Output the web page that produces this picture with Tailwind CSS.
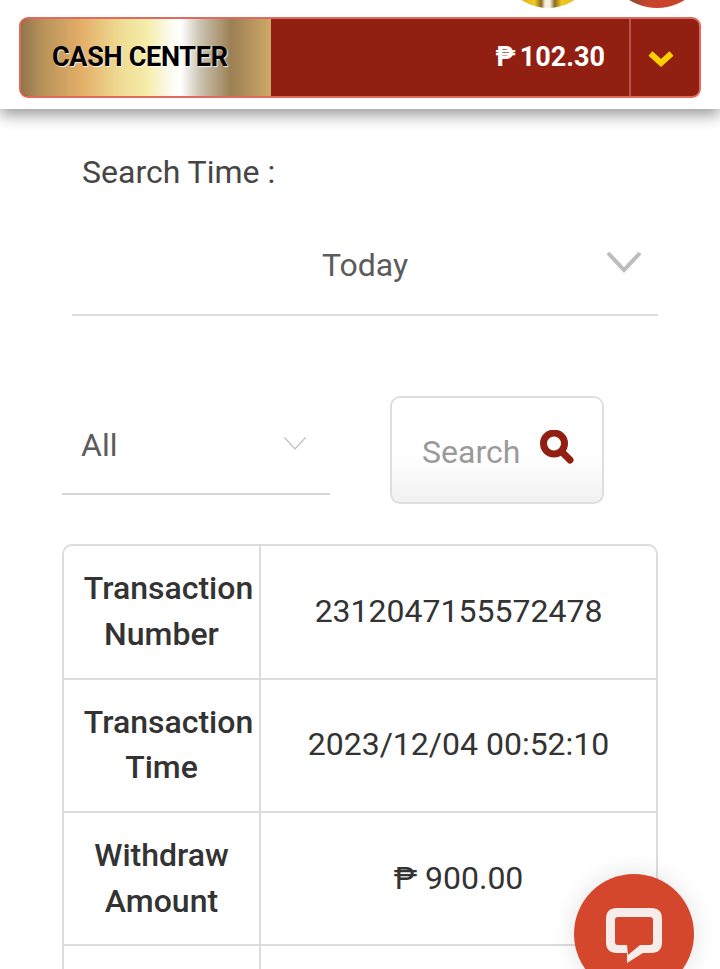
<!DOCTYPE html>
<html lang="en">
<head>
  <meta charset="UTF-8" />
  <title>Cash Center</title>
  <meta name="viewport" content="width=device-width, initial-scale=1.0" />
  <script src="https://cdn.jsdelivr.net/npm/@tailwindcss/browser@4"></script>
</head>
<body class="bg-white font-['Roboto','Noto_Sans',sans-serif]">
<div class="relative w-[720px] h-[969px] overflow-hidden bg-white">

  <!-- header -->
  <header class="relative z-10 h-[109px] bg-white pt-[17px] px-[19px] shadow-[0_6px_14px_rgba(0,0,0,0.4)]">
    <!-- medals cut off by the top edge -->
    <div class="absolute left-[500px] top-[-88px] w-[96px] h-[96px] rounded-full bg-[linear-gradient(90deg,#d8a818_0%,#e0b020_20%,#f0c820_36%,#8a6a20_43%,#f5f0e0_47%,#f5f0e0_52%,#8a6a20_57%,#f0c820_64%,#d8a818_100%)]"></div>
    <div class="absolute left-[605px] top-[-96px] w-[104px] h-[104px] rounded-full bg-[linear-gradient(100deg,#7a4a34_30%,#c9452c_50%,#c9402a_100%)]"></div>

    <div class="flex h-[81px] w-[682px] rounded-[9px] border-2 border-[#e2695e] overflow-hidden bg-[#912013]">
      <div class="flex items-center w-[250px] h-full pl-[31px] bg-[linear-gradient(90deg,#93744c_0%,#b8935a_9%,#e3ae68_24%,#efdc94_40%,#f5eca8_50%,#fdfbf0_60%,#ffffff_64%,#c9c0ae_72%,#9c8054_84%,#b5935c_92%,#cdaa66_100%)]">
        <span class="text-[27px] leading-none font-bold text-black tracking-[-0.3px] [text-shadow:1px_1px_1px_rgba(255,255,255,0.8)]">CASH CENTER</span>
      </div>
      <div class="flex items-center justify-end flex-1 h-full pr-[24px] text-white text-[27px] font-bold pb-[1px]">
        <span class="mr-[4px]">₱</span><span>102.30</span>
      </div>
      <div class="flex items-center justify-center w-[70px] h-full border-l-2 border-l-[#b5564c]">
        <svg width="26" height="18" viewBox="0 0 26 18" class="mt-[3px] -ml-[8px]"><path d="M2.5 3.5 L13 13 L23.5 3.5" fill="none" stroke="#fbd000" stroke-width="6"/></svg>
      </div>
    </div>
  </header>

  <main class="relative">
    <!-- search time -->
    <p class="pl-[82px] pt-[44px] text-[32px] leading-[38px] text-[#454545]">Search Time :</p>

    <div class="flex items-center relative ml-[72px] w-[586px] h-[84px] mt-[41px] border-b-2 border-[#dcdcdc]">
      <span class="w-full text-center text-[32px] leading-[38px] text-[#5c5c5c] pb-[16px]">Today</span>
      <svg width="36" height="22" viewBox="0 0 36 22" class="absolute right-[16px] top-[19px]"><path d="M2 2 L18 19 L34 2" fill="none" stroke="#bdbdbd" stroke-width="4"/></svg>
    </div>

    <!-- filter row -->
    <div class="flex items-start ml-[62px] mt-[80px]">
      <div class="relative flex items-center w-[268px] h-[99px] border-b-2 border-[#d6d6d6] pl-[19px]">
        <span class="text-[32px] leading-[38px] text-[#5c5c5c]">All</span>
        <svg width="24" height="16" viewBox="0 0 24 16" class="absolute left-[221px] top-[40px]"><path d="M1.5 1.5 L12 13 L22.5 1.5" fill="none" stroke="#c4c4c4" stroke-width="1.5"/></svg>
      </div>
      <button class="flex items-center ml-[60px] w-[214px] h-[108px] rounded-[10px] border-2 border-[#dedede] bg-[linear-gradient(180deg,#ffffff_0%,#ffffff_55%,#f1f1f1_100%)] pl-[30px]">
        <span class="text-[32px] leading-[38px] text-[#9a9a9a] mt-[3px]">Search</span>
        <svg width="36" height="36" viewBox="0 0 36 36" class="ml-[20px] -mt-[5px]"><circle cx="14" cy="13.5" r="10.5" fill="none" stroke="#912013" stroke-width="7"/><path d="M22 22 L30 30" stroke="#912013" stroke-width="7" stroke-linecap="round"/></svg>
      </button>
    </div>

    <!-- details table -->
    <div class="ml-[62px] mt-[40px] w-[596px] rounded-tl-[10px] rounded-tr-[10px] border-2 border-b-0 border-[#dcdcdc]">
      <div class="flex h-[134px] border-b-2 border-[#dcdcdc]">
        <div class="flex items-center justify-center w-[197px] shrink-0 border-r-2 border-[#dcdcdc] text-[32px] leading-[45.5px] font-medium text-[#333] text-center pb-[1px]">
          <span class="block whitespace-nowrap"><span class="inline-block translate-x-[7px]">Transaction</span><br />Number</span>
        </div>
        <div class="flex items-center justify-center flex-1 text-[32px] text-[#333] pb-[2px]">2312047155572478</div>
      </div>
      <div class="flex h-[133px] border-b-2 border-[#dcdcdc]">
        <div class="flex items-center justify-center w-[197px] shrink-0 border-r-2 border-[#dcdcdc] text-[32px] leading-[45.5px] font-medium text-[#333] text-center pb-[1px]">
          <span class="block whitespace-nowrap"><span class="inline-block translate-x-[7px]">Transaction</span><br />Time</span>
        </div>
        <div class="flex items-center justify-center flex-1 text-[32px] text-[#333] pb-[4px]">2023/12/04 00:52:10</div>
      </div>
      <div class="flex h-[133px] border-b-2 border-[#dcdcdc]">
        <div class="flex items-center justify-center w-[197px] shrink-0 border-r-2 border-[#dcdcdc] text-[32px] leading-[45.5px] font-medium text-[#333] text-center">
          <span class="block whitespace-nowrap">Withdraw<br />Amount</span>
        </div>
        <div class="flex items-center justify-center flex-1 text-[32px] text-[#333] pb-[2px]">₱ 900.00</div>
      </div>
      <div class="flex h-[60px]">
        <div class="w-[197px] shrink-0 border-r-2 border-[#dcdcdc]"></div>
        <div class="flex-1"></div>
      </div>
    </div>
  </main>

  <!-- chat button -->
  <div class="absolute z-20 left-[574px] top-[874px] flex justify-center w-[120px] h-[120px] rounded-full bg-[#d5472c] shadow-[0_0_24px_rgba(0,0,0,0.12)]">
    <svg width="56" height="56" viewBox="0 0 56 56" class="mt-[34px]"><path fill="#f6ece9" fill-rule="evenodd" d="M11 0 H45 Q56 0 56 11 V34 Q56 45 45 45 H37 L21 55 V45 H11 Q0 45 0 34 V11 Q0 0 11 0 Z M12 9 Q9 9 9 12 V34 Q9 37 12 37 H21 L22 47 L34 37 H44 Q47 37 47 34 V12 Q47 9 44 9 Z"/></svg>
  </div>
</div>
</body>
</html>
